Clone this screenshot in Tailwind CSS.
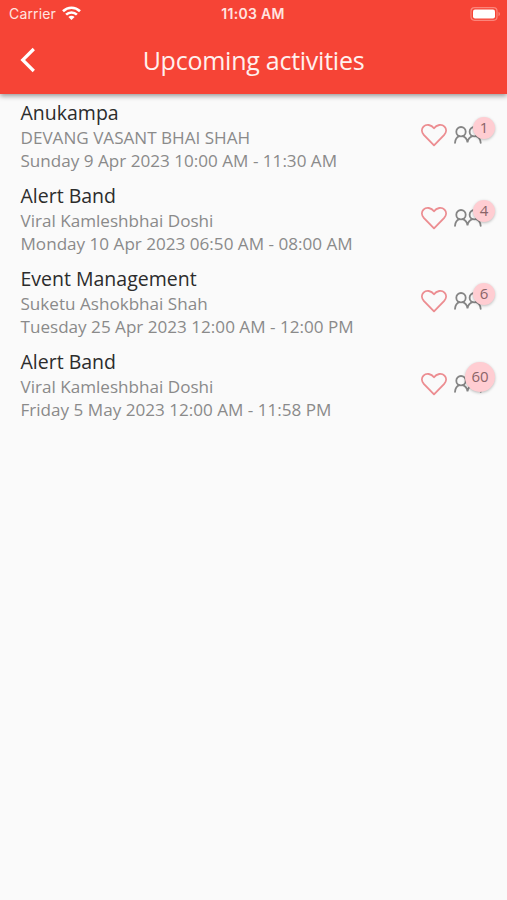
<!DOCTYPE html>
<html lang="en">
<head>
  <meta charset="UTF-8" />
  <title>Upcoming activities</title>
  <script src="https://cdn.jsdelivr.net/npm/@tailwindcss/browser@4"></script>
</head>
<body class="bg-[#fafafa] min-h-screen overflow-hidden font-['Open_Sans',sans-serif]">
  <!-- shared icons -->
  <svg class="hidden">
    <symbol id="heart" viewBox="0 0 26 24">
      <path d="M13 22.300 3 12.200C.5 9.500.3 5.900 2.500 3.600 5.300.9 10.300 1.500 13 5.200 15.700 1.500 20.700.9 23.500 3.600c2.200 2.300 2 5.900-.5 8.600z" fill="none" stroke="#ec8d91" stroke-width="1.900" stroke-linejoin="round" />
    </symbol>
    <symbol id="people" viewBox="0 0 28 18">
      <g fill="none" stroke="#858585" stroke-width="1.800" stroke-linecap="round">
        <circle cx="7" cy="5.700" r="4.700" />
        <circle cx="20.300" cy="5.700" r="4.700" />
        <path d="M1 16.800c.3-3.500 2-5.700 4.400-6.600M8.600 10.200c2.600.8 4.500 3 4.900 6.200.5-3.200 2.500-5.400 5.100-6.200M22 10.200c2.600.9 4.400 3.100 4.700 6.600" />
      </g>
    </symbol>
  </svg>

  <header class="relative h-[94px] bg-[#f64436] text-white shadow-[0_2px_5px_rgba(0,0,0,0.4)]">
    <div class="grid grid-cols-3 items-center h-[27px] pl-[9px] pr-[6px] text-[#ffe4e0] font-['Inter',sans-serif]">
      <div class="flex items-center gap-[6px]">
        <span class="-mt-[1px] text-[14px] tracking-[0.150px]">Carrier</span>
        <svg class="w-[19px] h-[14px] -mt-[2px]" viewBox="0 0 19 14" fill="none" stroke="#fff" stroke-width="2.600">
          <path d="M1 5.200C5.800.600 13.200.600 18 5.200M4.100 8.600c3-2.900 7.800-2.900 10.800 0" />
          <path d="M9.500 13.900 6.400 10.900c1.700-1.600 4.500-1.600 6.200 0z" fill="#fff" stroke="none" />
        </svg>
      </div>
      <span class="-ml-[4px] -mt-[1px] text-center font-semibold text-[14px] tracking-[0.300px] whitespace-nowrap">11:03 AM</span>
      <svg class="justify-self-end w-[31px] h-[14px]" viewBox="0 0 31 14">
        <rect x="1" y=".7" width="26" height="12.600" rx="3.500" fill="none" stroke="#fb857b" stroke-width="1.200" />
        <rect x="3" y="2.500" width="22" height="9" rx="2" fill="#fff" />
        <path d="M28.500 4.800c2 .8 2 3.600 0 4.400z" fill="#fb857b" />
      </svg>
    </div>
    <div class="grid grid-cols-[60px_1fr_60px] items-center h-[65px]">
      <button class="pl-[20px]">
        <svg class="w-[16px] h-[26px]" viewBox="0 0 16 26" fill="none" stroke="#fff" stroke-width="3.200">
          <path d="M13.800 2 2.700 13l11.100 11" />
        </svg>
      </button>
      <h1 class="text-center text-[25px] leading-8 tracking-[-0.250px] text-[#fff0ee] whitespace-nowrap">Upcoming activities</h1>
    </div>
  </header>

  <main>
    <div class="flex items-center h-[83px] pl-[20.500px]">
      <div class="w-[400px] pt-[1px] whitespace-nowrap">
        <h2 class="text-[19.500px] leading-[26px] text-[#2c2c2c]">Anukampa</h2>
        <p class="text-[17.100px] leading-[23px] text-[#8a8a8a]">DEVANG VASANT BHAI SHAH</p>
        <p class="text-[17.100px] leading-[23px] text-[#8a8a8a]">Sunday 9 Apr 2023 10:00 AM - 11:30 AM</p>
      </div>
      <svg class="w-[26px] h-[24px] -mt-[1px]"><use href="#heart" /></svg>
      <div class="relative -mt-[2px] ml-[7px] w-[28px] h-[18px]">
        <svg class="w-[28px] h-[18px]"><use href="#people" /></svg>
        <span class="absolute left-[19.500px] -top-[9px] size-[22px] rounded-full bg-[#ffcdd2] text-[#8a6468] text-[15px] leading-[20px] text-center shadow-[0_1px_3px_rgba(0,0,0,0.25)]">1</span>
      </div>
    </div>
    <div class="flex items-center h-[83px] pl-[20.500px]">
      <div class="w-[400px] pt-[1px] whitespace-nowrap">
        <h2 class="text-[19.500px] leading-[26px] text-[#2c2c2c]">Alert Band</h2>
        <p class="text-[17.100px] leading-[23px] text-[#8a8a8a]">Viral Kamleshbhai Doshi</p>
        <p class="text-[17.100px] leading-[23px] text-[#8a8a8a]">Monday 10 Apr 2023 06:50 AM - 08:00 AM</p>
      </div>
      <svg class="w-[26px] h-[24px] -mt-[1px]"><use href="#heart" /></svg>
      <div class="relative -mt-[2px] ml-[7px] w-[28px] h-[18px]">
        <svg class="w-[28px] h-[18px]"><use href="#people" /></svg>
        <span class="absolute left-[19.500px] -top-[9px] size-[22px] rounded-full bg-[#ffcdd2] text-[#8a6468] text-[15px] leading-[20px] text-center shadow-[0_1px_3px_rgba(0,0,0,0.25)]">4</span>
      </div>
    </div>
    <div class="flex items-center h-[83px] pl-[20.500px]">
      <div class="w-[400px] pt-[1px] whitespace-nowrap">
        <h2 class="text-[19.500px] leading-[26px] text-[#2c2c2c]">Event Management</h2>
        <p class="text-[17.100px] leading-[23px] text-[#8a8a8a]">Suketu Ashokbhai Shah</p>
        <p class="text-[17.100px] leading-[23px] text-[#8a8a8a]">Tuesday 25 Apr 2023 12:00 AM - 12:00 PM</p>
      </div>
      <svg class="w-[26px] h-[24px] -mt-[1px]"><use href="#heart" /></svg>
      <div class="relative -mt-[2px] ml-[7px] w-[28px] h-[18px]">
        <svg class="w-[28px] h-[18px]"><use href="#people" /></svg>
        <span class="absolute left-[19.500px] -top-[9px] size-[22px] rounded-full bg-[#ffcdd2] text-[#8a6468] text-[15px] leading-[20px] text-center shadow-[0_1px_3px_rgba(0,0,0,0.25)]">6</span>
      </div>
    </div>
    <div class="flex items-center h-[83px] pl-[20.500px]">
      <div class="w-[400px] pt-[1px] whitespace-nowrap">
        <h2 class="text-[19.500px] leading-[26px] text-[#2c2c2c]">Alert Band</h2>
        <p class="text-[17.100px] leading-[23px] text-[#8a8a8a]">Viral Kamleshbhai Doshi</p>
        <p class="text-[17.100px] leading-[23px] text-[#8a8a8a]">Friday 5 May 2023 12:00 AM - 11:58 PM</p>
      </div>
      <svg class="w-[26px] h-[24px] -mt-[1px]"><use href="#heart" /></svg>
      <div class="relative -mt-[2px] ml-[7px] w-[28px] h-[18px]">
        <svg class="w-[28px] h-[18px]"><use href="#people" /></svg>
        <span class="absolute left-[11.500px] -top-[13px] size-[30px] rounded-full bg-[#ffcdd2] text-[#8a6468] text-[15px] leading-[29px] text-center shadow-[0_1px_3px_rgba(0,0,0,0.25)]">60</span>
      </div>
    </div>
  </main>
</body>
</html>
